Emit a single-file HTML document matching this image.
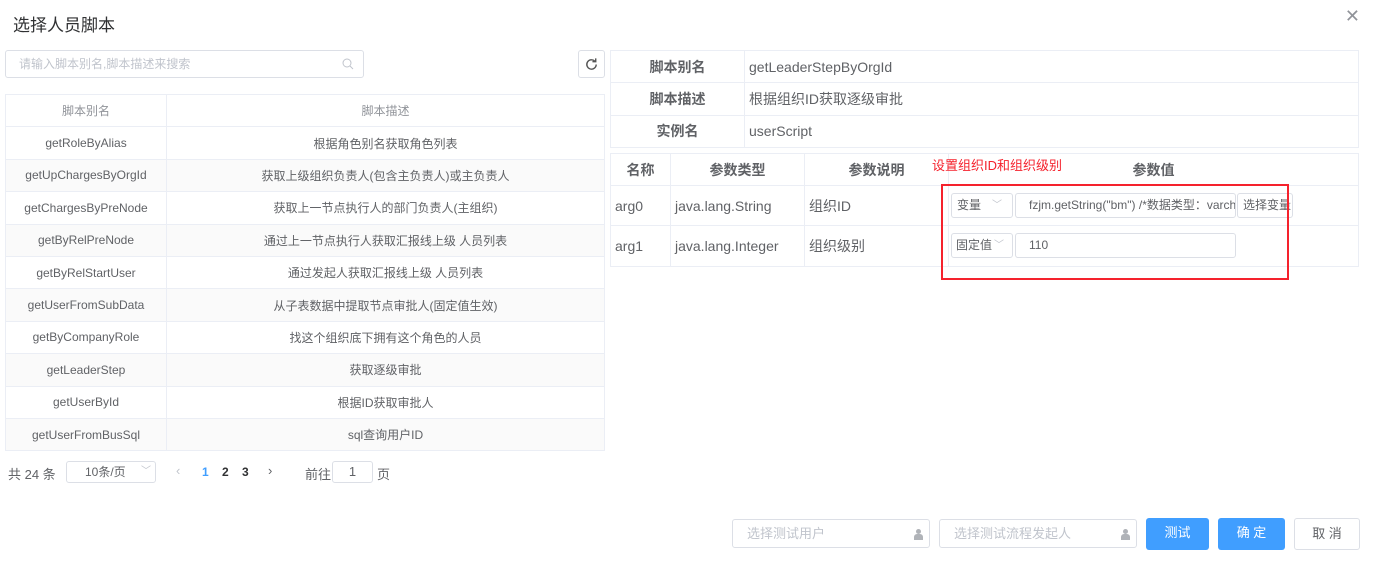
<!DOCTYPE html>
<html><head><meta charset="utf-8"><style>
*{box-sizing:border-box;margin:0;padding:0}
body{width:1374px;height:561px;background:#fff;font-family:"Liberation Sans","Noto Sans CJK SC",sans-serif;color:#606266;position:relative;overflow:hidden;font-size:12px}
.a{position:absolute;white-space:nowrap}
.title{left:13px;top:11px;font-size:17px;color:#303133}
.close{right:14px;top:6px;font-size:18px;color:#909399}
.inp{border:1px solid #dcdfe6;border-radius:3px;background:#fff}
table{border-collapse:collapse;position:absolute;table-layout:fixed}
td{border:1px solid #ebeef5;white-space:nowrap;overflow:hidden}
.lt td{text-align:center;height:32.4px;font-size:12px;color:#606266}
.lt tr.s td{background:#fafafa}
.lt tr.h td{color:#909399}
.rt td{height:32.3px;font-size:14px;color:#606266;padding-left:4px}
.rt td.l{text-align:center;font-weight:bold;color:#606266;padding:0}
.pt td{font-size:14px;padding-left:4px}
.pt tr.h td{text-align:center;font-weight:bold;height:32px;padding:0}
.btn{border-radius:3px;text-align:center;font-size:13px;line-height:30px}
.ch{color:#c0c4cc;font-size:10px}
</style></head><body>
<div class="a title">选择人员脚本</div>
<div class="a close">✕</div>
<div class="a inp" style="left:5px;top:50px;width:359px;height:28px;color:#c0c4cc;line-height:26px;padding-left:13px">请输入脚本别名,脚本描述来搜索
<svg class="a" style="right:9px;top:7px" width="12" height="12" viewBox="0 0 12 12"><circle cx="5" cy="5" r="4" fill="none" stroke="#c0c4cc" stroke-width="1"/><path d="M8 8l3 3" stroke="#c0c4cc"/></svg></div>
<div class="a inp" style="left:578px;top:50px;width:27px;height:28px">
<svg class="a" style="left:5px;top:6px" width="15" height="15" viewBox="0 0 16 16"><path d="M13 8a5 5 0 1 1-1.5-3.6" fill="none" stroke="#555" stroke-width="1.5"/><path d="M12.5 1.5v3.5h-3.5" fill="none" stroke="#555" stroke-width="1.5"/></svg></div>
<table class="lt" style="left:5px;top:94px;width:600px">
<col style="width:161px"><col>
<tr class="h"><td>脚本别名</td><td>脚本描述</td></tr>
<tr><td>getRoleByAlias</td><td>根据角色别名获取角色列表</td></tr>
<tr class="s"><td>getUpChargesByOrgId</td><td>获取上级组织负责人(包含主负责人)或主负责人</td></tr>
<tr><td>getChargesByPreNode</td><td>获取上一节点执行人的部门负责人(主组织)</td></tr>
<tr class="s"><td>getByRelPreNode</td><td>通过上一节点执行人获取汇报线上级 人员列表</td></tr>
<tr><td>getByRelStartUser</td><td>通过发起人获取汇报线上级 人员列表</td></tr>
<tr class="s"><td>getUserFromSubData</td><td>从子表数据中提取节点审批人(固定值生效)</td></tr>
<tr><td>getByCompanyRole</td><td>找这个组织底下拥有这个角色的人员</td></tr>
<tr class="s"><td>getLeaderStep</td><td>获取逐级审批</td></tr>
<tr><td>getUserById</td><td>根据ID获取审批人</td></tr>
<tr class="s"><td>getUserFromBusSql</td><td>sql查询用户ID</td></tr>
</table>
<div class="a" style="left:8px;top:464px;font-size:13px">共 24 条</div>
<div class="a inp" style="left:66px;top:461px;width:90px;height:22px;line-height:20px;padding-left:18px;font-size:12px">10条/页<span class="a ch" style="left:74px;top:0">﹀</span></div>
<div class="a" style="left:176px;top:463px;color:#c0c4cc;font-size:13px">‹</div>
<div class="a" style="left:202px;top:465px;color:#409eff;font-weight:bold">1</div>
<div class="a" style="left:222px;top:465px;color:#303133;font-weight:bold">2</div>
<div class="a" style="left:242px;top:465px;color:#303133;font-weight:bold">3</div>
<div class="a" style="left:268px;top:463px;color:#606266;font-size:13px">›</div>
<div class="a" style="left:305px;top:464px;font-size:13px">前往</div>
<div class="a inp" style="left:332px;top:461px;width:41px;height:22px;text-align:center;line-height:20px;font-size:13px">1</div>
<div class="a" style="left:377px;top:464px;font-size:13px">页</div>

<table class="rt" style="left:610px;top:50px;width:749px">
<col style="width:134px"><col>
<tr><td class="l">脚本别名</td><td>getLeaderStepByOrgId</td></tr>
<tr><td class="l">脚本描述</td><td>根据组织ID获取逐级审批</td></tr>
<tr><td class="l">实例名</td><td>userScript</td></tr>
</table>
<table class="pt" style="left:610px;top:153px;width:749px">
<col style="width:60px"><col style="width:134px"><col style="width:144px"><col>
<tr class="h"><td>名称</td><td>参数类型</td><td>参数说明</td><td>参数值</td></tr>
<tr style="height:40px"><td>arg0</td><td>java.lang.String</td><td>组织ID</td><td></td></tr>
<tr style="height:41px"><td>arg1</td><td>java.lang.Integer</td><td>组织级别</td><td></td></tr>
</table>
<div class="a" style="left:932px;top:155px;color:#f5222d;font-size:13px">设置组织ID和组织级别</div>
<div class="a inp" style="left:951px;top:193px;width:62px;height:25px;line-height:23px;padding-left:5px">变量<span class="a ch" style="left:40px;top:0">﹀</span></div>
<div class="a inp" style="left:1015px;top:193px;width:221px;height:25px;line-height:23px;padding-left:13px;overflow:hidden">fzjm.getString("bm") /*数据类型：varcha</div>
<div class="a inp" style="left:1237px;top:193px;width:56px;height:25px;line-height:23px;padding-left:5px;overflow:hidden">选择变量</div>
<div class="a inp" style="left:951px;top:233px;width:62px;height:25px;line-height:23px;padding-left:4px">固定值<span class="a ch" style="left:42px;top:0">﹀</span></div>
<div class="a inp" style="left:1015px;top:233px;width:221px;height:25px;line-height:23px;padding-left:13px">110</div>
<div class="a" style="left:941px;top:184px;width:348px;height:96px;border:2px solid #f5222d"></div>

<div class="a inp" style="left:732px;top:519px;width:198px;height:29px;color:#c0c4cc;line-height:27px;padding-left:14px;font-size:13px">选择测试用户<span class="a" style="right:6px;top:9px;width:9px;height:11px"><span class="a" style="left:2px;top:0;width:5px;height:5px;border-radius:50%;background:#b0b3b8"></span><span class="a" style="left:0;top:5px;width:9px;height:6px;border-radius:3px 3px 0 0;background:#b0b3b8"></span></span></div>
<div class="a inp" style="left:939px;top:519px;width:198px;height:29px;color:#c0c4cc;line-height:27px;padding-left:14px;font-size:13px">选择测试流程发起人<span class="a" style="right:6px;top:9px;width:9px;height:11px"><span class="a" style="left:2px;top:0;width:5px;height:5px;border-radius:50%;background:#b0b3b8"></span><span class="a" style="left:0;top:5px;width:9px;height:6px;border-radius:3px 3px 0 0;background:#b0b3b8"></span></span></div>
<div class="a btn" style="left:1146px;top:518px;width:63px;height:32px;background:#409eff;color:#fff">测试</div>
<div class="a btn" style="left:1218px;top:518px;width:67px;height:32px;background:#409eff;color:#fff">确 定</div>
<div class="a btn inp" style="left:1294px;top:518px;width:66px;height:32px;color:#606266">取 消</div>
</body></html>
